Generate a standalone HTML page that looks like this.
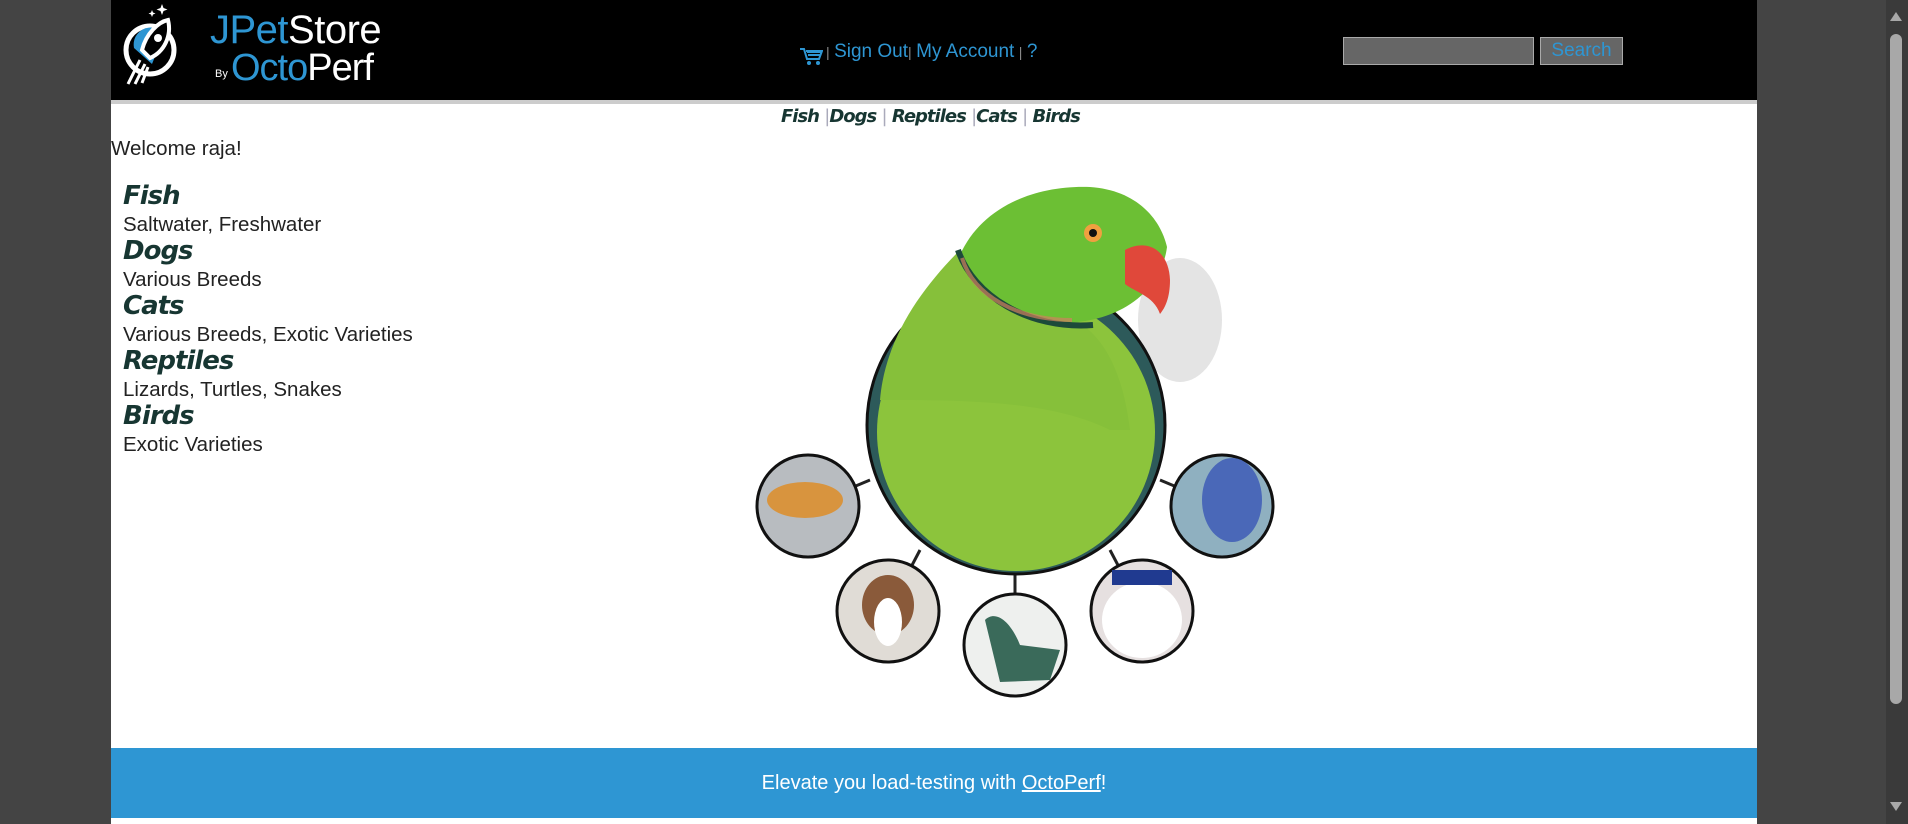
<!DOCTYPE html>
<html><head><meta charset="utf-8"><style>
*{margin:0;padding:0;box-sizing:border-box}
body{width:1908px;height:824px;background:#444;position:relative;overflow:hidden;font-family:"Liberation Sans",Arial,sans-serif}
.abs{position:absolute}
#page{left:111px;top:0;width:1646px;height:824px;background:#fff}
#hdr{left:111px;top:0;width:1646px;height:100px;background:#000}
#line{left:111px;top:100px;width:1646px;height:4px;background:#ccc}
.lnk{color:#2e96d3;font-size:19px}
.sep{color:#888;font-size:14px}
.cat{font-family:"DejaVu Sans",sans-serif;font-weight:bold;font-style:italic;color:#173632;letter-spacing:-1px}
.sub{font-size:20.5px;color:#222}
#foot{left:111px;top:748px;width:1646px;height:70px;background:#2e96d3;color:#fff;font-size:20px;text-align:center;line-height:70px}
#sb{left:1886px;top:0;width:22px;height:824px;background:#3a3a3a}
</style></head><body>
<div class="abs" id="page"></div>
<div class="abs" id="hdr"></div>
<div class="abs" id="line"></div>
<svg class="abs" style="left:120px;top:0" width="70" height="92" viewBox="0 0 70 92">
<path d="M42 4l1.5 4 4 1.5-4 1.5-1.5 4-1.5-4-4-1.5 4-1.5z" fill="#fff"/>
<path d="M32 10l1 2.5 2.5 1-2.5 1-1 2.5-1-2.5-2.5-1 2.5-1z" fill="#fff"/>
<circle cx="30" cy="50" r="24" fill="none" stroke="#fff" stroke-width="5"/>
<path d="M14 48a17 17 0 0 1 30-14l-12 30z" fill="#2e96d3"/>
<path d="M48 20c-10 2-22 14-26 30l8 8c14-6 22-22 18-38z" fill="#000" stroke="#fff" stroke-width="4"/>
<circle cx="38" cy="38" r="4" fill="#fff"/>
<path d="M20 60l-12 24M25 64l-10 20M28 67l-6 16" stroke="#fff" stroke-width="3"/>
</svg>
<div class="abs" style="left:210px;top:8px;font-size:40px;color:#fff;letter-spacing:-0.5px"><span style="color:#2e96d3">JPet</span>Store</div>
<div class="abs" style="left:215px;top:68px;font-size:11px;color:#fff">By</div>
<div class="abs" style="left:231px;top:47px;font-size:38px;color:#fff;letter-spacing:-1px"><span style="color:#2e96d3">Octo</span>Perf</div>
<svg class="abs" style="left:799px;top:46px" width="24" height="20" viewBox="0 0 24 20"><path d="M1 3h4l3 10h12l3-8H7" fill="none" stroke="#2e96d3" stroke-width="2"/><path d="M8 6h14M9 9h12" stroke="#2e96d3" stroke-width="2"/><circle cx="10" cy="17" r="2" fill="#2e96d3"/><circle cx="19" cy="17" r="2" fill="#2e96d3"/></svg>
<div class="abs" style="left:826px;top:41px;white-space:nowrap"><span class="sep">|</span> <span class="lnk">Sign Out</span><span class="sep">|</span> <span class="lnk">My Account</span> <span class="sep">|</span> <span class="lnk">?</span></div>
<div class="abs" style="left:1343px;top:37px;width:191px;height:28px;background:#666;border:1px solid #aaa"></div>
<div class="abs" style="left:1540px;top:37px;width:83px;height:28px;background:#666;border:1px solid #aaa;color:#2e96d3;font-size:19px;text-align:center;line-height:26px">Search</div>
<div class="abs cat" style="left:781px;top:106px;font-size:18px;white-space:nowrap">Fish <span style="color:#aab;font-style:normal;font-weight:normal">|</span>Dogs <span style="color:#aab;font-style:normal;font-weight:normal">|</span> Reptiles <span style="color:#aab;font-style:normal;font-weight:normal">|</span>Cats <span style="color:#aab;font-style:normal;font-weight:normal">|</span> Birds</div>
<div class="abs sub" style="left:111px;top:137px;font-size:20.5px">Welcome raja!</div>
<div class="abs" style="left:123px;top:183px;line-height:27.5px">
<div class="cat" style="font-size:26px">Fish</div><div class="sub">Saltwater, Freshwater</div>
<div class="cat" style="font-size:26px">Dogs</div><div class="sub">Various Breeds</div>
<div class="cat" style="font-size:26px">Cats</div><div class="sub">Various Breeds, Exotic Varieties</div>
<div class="cat" style="font-size:26px">Reptiles</div><div class="sub">Lizards, Turtles, Snakes</div>
<div class="cat" style="font-size:26px">Birds</div><div class="sub">Exotic Varieties</div>
</div>
<svg class="abs" style="left:0;top:0" width="1908" height="824">
<ellipse cx="1180" cy="320" rx="42" ry="62" fill="#d8d8d8" opacity=".7"/>
<g stroke="#222" stroke-width="3"><line x1="870" y1="480" x2="808" y2="506"/><line x1="920" y1="550" x2="888" y2="611"/><line x1="1015" y1="570" x2="1015" y2="645"/><line x1="1110" y1="550" x2="1142" y2="611"/><line x1="1160" y1="480" x2="1222" y2="506"/></g>
<circle cx="1016" cy="425" r="149" fill="#2d5a5a" stroke="#111" stroke-width="3"/>
<circle cx="1016" cy="432" r="139" fill="#8cc43c"/>
<path d="M880 400c5-60 40-110 80-150l90 60c40 10 70 40 80 120l-20 0c-60-30-150-30-230-30z" fill="#86c03a"/>
<path d="M960 255c20-45 70-70 130-68c45 3 70 30 77 60c-5 40-40 70-90 75c-50 5-100-20-117-67z" fill="#6cbf34"/>
<path d="M958 250c15 45 70 80 135 75" stroke="#1d4a3a" stroke-width="6" fill="none"/>
<path d="M962 258c12 38 55 62 110 62" stroke="#d08060" stroke-width="4" fill="none" opacity=".7"/>
<path d="M1125 250c22-12 44 0 45 30c0 18-5 28-10 34c-6-18-25-22-35-30z" fill="#e0483a"/>
<circle cx="1093" cy="233" r="9" fill="#f0a040"/><circle cx="1093" cy="233" r="4" fill="#111"/>
<g stroke="#111" stroke-width="3">
<circle cx="808" cy="506" r="51" fill="#b8bcc0"/>
<circle cx="888" cy="611" r="51" fill="#e0dcd6"/>
<circle cx="1015" cy="645" r="51" fill="#eef0ee"/>
<circle cx="1142" cy="611" r="51" fill="#e6e0e0"/>
<circle cx="1222" cy="506" r="51" fill="#8fb0c0"/>
</g>
<ellipse cx="805" cy="500" rx="38" ry="18" fill="#d8943e"/>
<ellipse cx="888" cy="605" rx="26" ry="30" fill="#8a5a3a"/><ellipse cx="888" cy="622" rx="14" ry="24" fill="#fff"/>
<path d="M985 620c10-10 25 0 35 25l40 5-10 30-50 2z" fill="#3a6a5a"/>
<ellipse cx="1142" cy="620" rx="40" ry="38" fill="#fff"/><path d="M1112 570h60v15h-60z" fill="#203a90"/>
<ellipse cx="1232" cy="500" rx="30" ry="42" fill="#4a68b8"/>
</svg>
<div class="abs" id="foot">Elevate you load-testing with <span style="text-decoration:underline">OctoPerf</span>!</div>
<div class="abs" id="sb"></div>
<div class="abs" style="left:1890px;top:34px;width:12px;height:670px;background:#a8a8a8;border-radius:6px"></div>
<div class="abs" style="left:1890px;top:12px;width:0;height:0;border-left:6px solid transparent;border-right:6px solid transparent;border-bottom:9px solid #a8a8a8"></div>
<div class="abs" style="left:1890px;top:802px;width:0;height:0;border-left:6px solid transparent;border-right:6px solid transparent;border-top:9px solid #a8a8a8"></div>
</body></html>
